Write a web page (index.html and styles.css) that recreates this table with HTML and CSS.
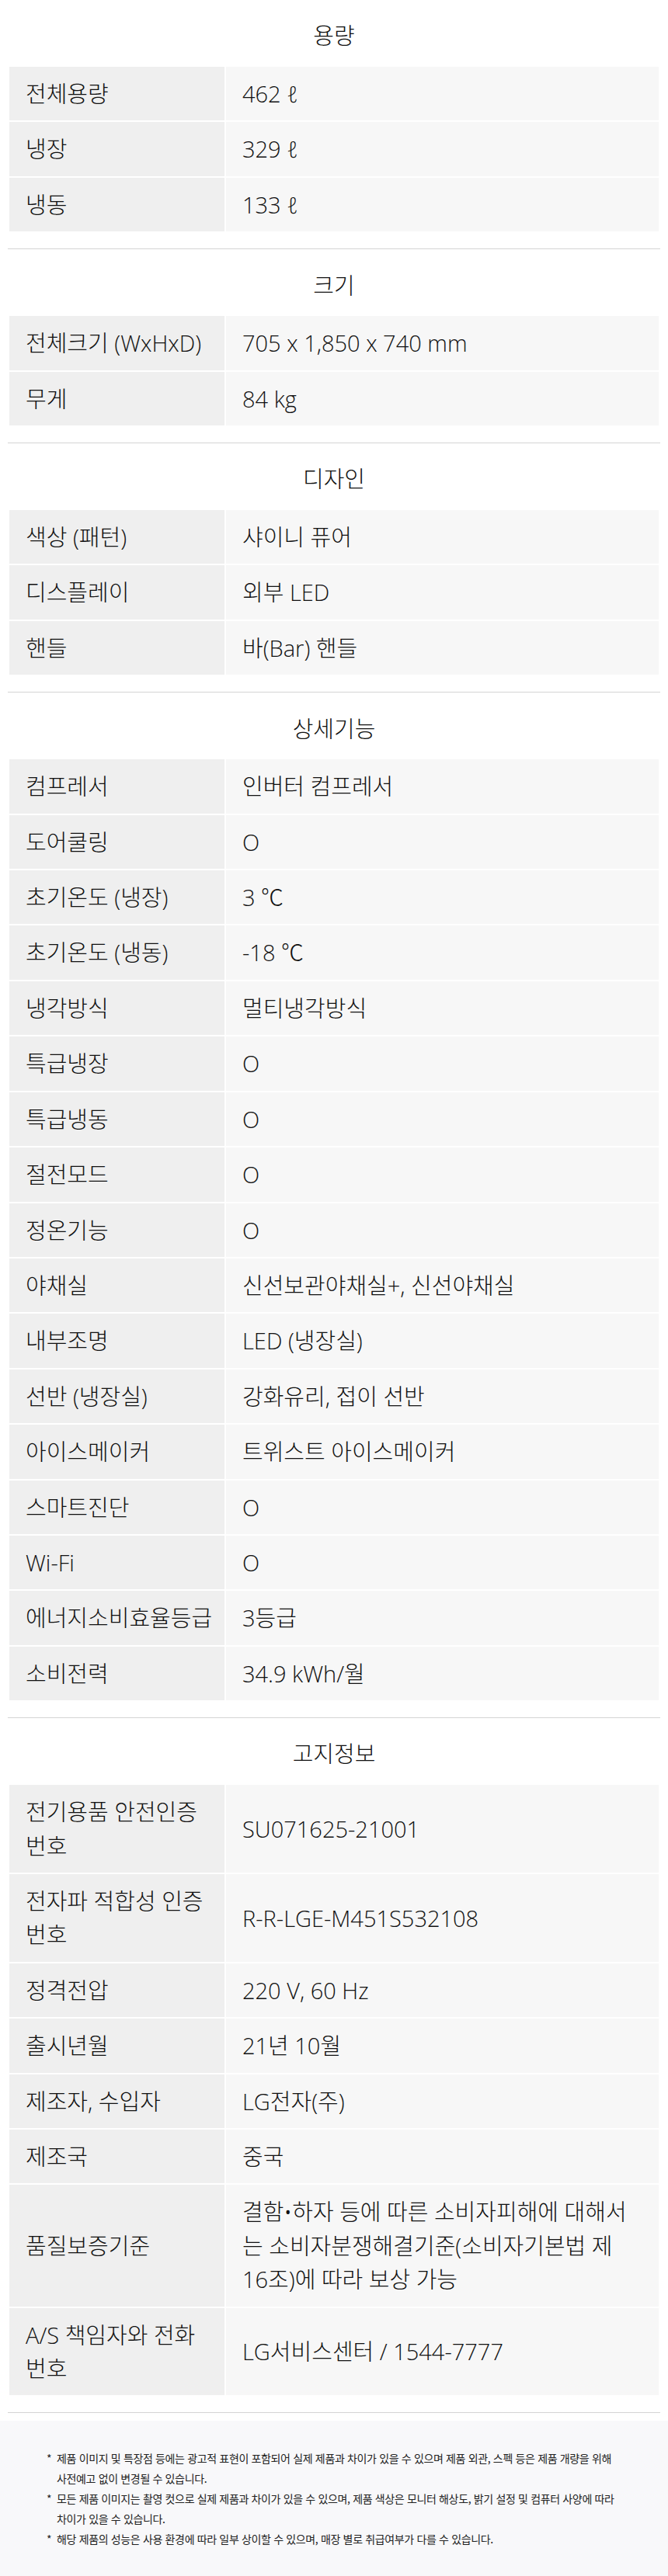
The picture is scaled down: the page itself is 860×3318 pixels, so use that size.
FILE: index.html
```html
<!DOCTYPE html>
<html lang="ko">
<head>
<meta charset="utf-8">
<title>제품 사양</title>
<link rel="stylesheet" href="styles.css">
</head>
<body>
<main class="specs">
  <section class="spec-section">
    <h2 class="spec-title">용량</h2>
    <table class="spec-table">
      <colgroup><col class="label-col"><col class="value-col"></colgroup>
      <tr><th>전체용량</th><td>462 ℓ</td></tr>
      <tr><th>냉장</th><td>329 ℓ</td></tr>
      <tr><th>냉동</th><td>133 ℓ</td></tr>
    </table>
  </section>
  <section class="spec-section">
    <h2 class="spec-title">크기</h2>
    <table class="spec-table">
      <colgroup><col class="label-col"><col class="value-col"></colgroup>
      <tr><th>전체크기 (WxHxD)</th><td>705 x 1,850 x 740 mm</td></tr>
      <tr><th>무게</th><td>84 kg</td></tr>
    </table>
  </section>
  <section class="spec-section">
    <h2 class="spec-title">디자인</h2>
    <table class="spec-table">
      <colgroup><col class="label-col"><col class="value-col"></colgroup>
      <tr><th>색상 (패턴)</th><td>샤이니 퓨어</td></tr>
      <tr><th>디스플레이</th><td>외부 LED</td></tr>
      <tr><th>핸들</th><td>바(Bar) 핸들</td></tr>
    </table>
  </section>
  <section class="spec-section">
    <h2 class="spec-title">상세기능</h2>
    <table class="spec-table">
      <colgroup><col class="label-col"><col class="value-col"></colgroup>
      <tr><th>컴프레서</th><td>인버터 컴프레서</td></tr>
      <tr><th>도어쿨링</th><td>O</td></tr>
      <tr><th>초기온도 (냉장)</th><td>3 ℃</td></tr>
      <tr><th>초기온도 (냉동)</th><td>-18 ℃</td></tr>
      <tr><th>냉각방식</th><td>멀티냉각방식</td></tr>
      <tr><th>특급냉장</th><td>O</td></tr>
      <tr><th>특급냉동</th><td>O</td></tr>
      <tr><th>절전모드</th><td>O</td></tr>
      <tr><th>정온기능</th><td>O</td></tr>
      <tr><th>야채실</th><td>신선보관야채실+, 신선야채실</td></tr>
      <tr><th>내부조명</th><td>LED (냉장실)</td></tr>
      <tr><th>선반 (냉장실)</th><td>강화유리, 접이 선반</td></tr>
      <tr><th>아이스메이커</th><td>트위스트 아이스메이커</td></tr>
      <tr><th>스마트진단</th><td>O</td></tr>
      <tr><th>Wi-Fi</th><td>O</td></tr>
      <tr><th>에너지소비효율등급</th><td>3등급</td></tr>
      <tr><th>소비전력</th><td>34.9 kWh/월</td></tr>
    </table>
  </section>
  <section class="spec-section">
    <h2 class="spec-title">고지정보</h2>
    <table class="spec-table">
      <colgroup><col class="label-col"><col class="value-col"></colgroup>
      <tr><th>전기용품 안전인증<br>번호</th><td>SU071625-21001</td></tr>
      <tr><th>전자파 적합성 인증<br>번호</th><td>R-R-LGE-M451S532108</td></tr>
      <tr><th>정격전압</th><td>220 V, 60 Hz</td></tr>
      <tr><th>출시년월</th><td>21년 10월</td></tr>
      <tr><th>제조자, 수입자</th><td>LG전자(주)</td></tr>
      <tr><th>제조국</th><td>중국</td></tr>
      <tr><th>품질보증기준</th><td>결함•하자 등에 따른 소비자피해에 대해서<br>는 소비자분쟁해결기준(소비자기본법 제<br>16조)에 따라 보상 가능</td></tr>
      <tr><th>A/S 책임자와 전화<br>번호</th><td>LG서비스센터 / 1544-7777</td></tr>
    </table>
  </section>
</main>
<footer class="notice">
  <ul class="notice-list">
    <li>제품 이미지 및 특장점 등에는 광고적 표현이 포함되어 실제 제품과 차이가 있을 수 있으며 제품 외관, 스펙 등은 제품 개량을 위해 사전예고 없이 변경될 수 있습니다.</li>
    <li>모든 제품 이미지는 촬영 컷으로 실제 제품과 차이가 있을 수 있으며, 제품 색상은 모니터 해상도, 밝기 설정 및 컴퓨터 사양에 따라 차이가 있을 수 있습니다.</li>
    <li>해당 제품의 성능은 사용 환경에 따라 일부 상이할 수 있으며, 매장 별로 취급여부가 다를 수 있습니다.</li>
  </ul>
</footer>
</body>
</html>
```

FILE: styles.css
```css
* {
  box-sizing: border-box;
}

html,
body {
  margin: 0;
  padding: 0;
  background: #ffffff;
}

body {
  font-family: "Open Sans", "Noto Sans CJK KR", sans-serif;
  color: #111111;
}

.specs {
  padding: 0 10px;
}

.spec-section {
  padding-bottom: 20px;
  border-bottom: 1px solid #d4d4d4;
}

.spec-title {
  margin: 0;
  padding: 24.3px 0 16.3px;
  font-size: 29px;
  font-weight: 300;
  line-height: 43.4px;
  text-align: center;
  color: #111111;
}

.spec-table {
  width: 840px;
  margin: 0;
  border-collapse: separate;
  border-spacing: 2px;
  table-layout: fixed;
}

.spec-table .label-col {
  width: 277px;
}

.spec-table th,
.spec-table td {
  font-size: 29px;
  font-weight: 300;
  line-height: 43.4px;
  text-align: left;
  vertical-align: middle;
  color: #111111;
  white-space: nowrap;
}

.spec-table th {
  background: #efefef;
  padding: 13px 4px 13px 21px;
}

.spec-table td {
  background: #f7f7f7;
  padding: 13px 10px 13px 21px;
}

.notice {
  margin-top: 10px;
  background: #f8f8fa;
  padding: 35px 52px 35px 60px;
}

.notice-list {
  list-style: none;
  margin: 0;
  padding: 0;
  font-family: "Noto Sans CJK KR", sans-serif;
  font-size: 14px;
  line-height: 26px;
  letter-spacing: -0.35px;
  color: #222222;
  word-break: keep-all;
}

.notice-list li {
  padding-left: 13px;
  text-indent: -13px;
}

.notice-list li::before {
  content: "*";
  display: inline-block;
  width: 13px;
  text-indent: 0;
}
```
